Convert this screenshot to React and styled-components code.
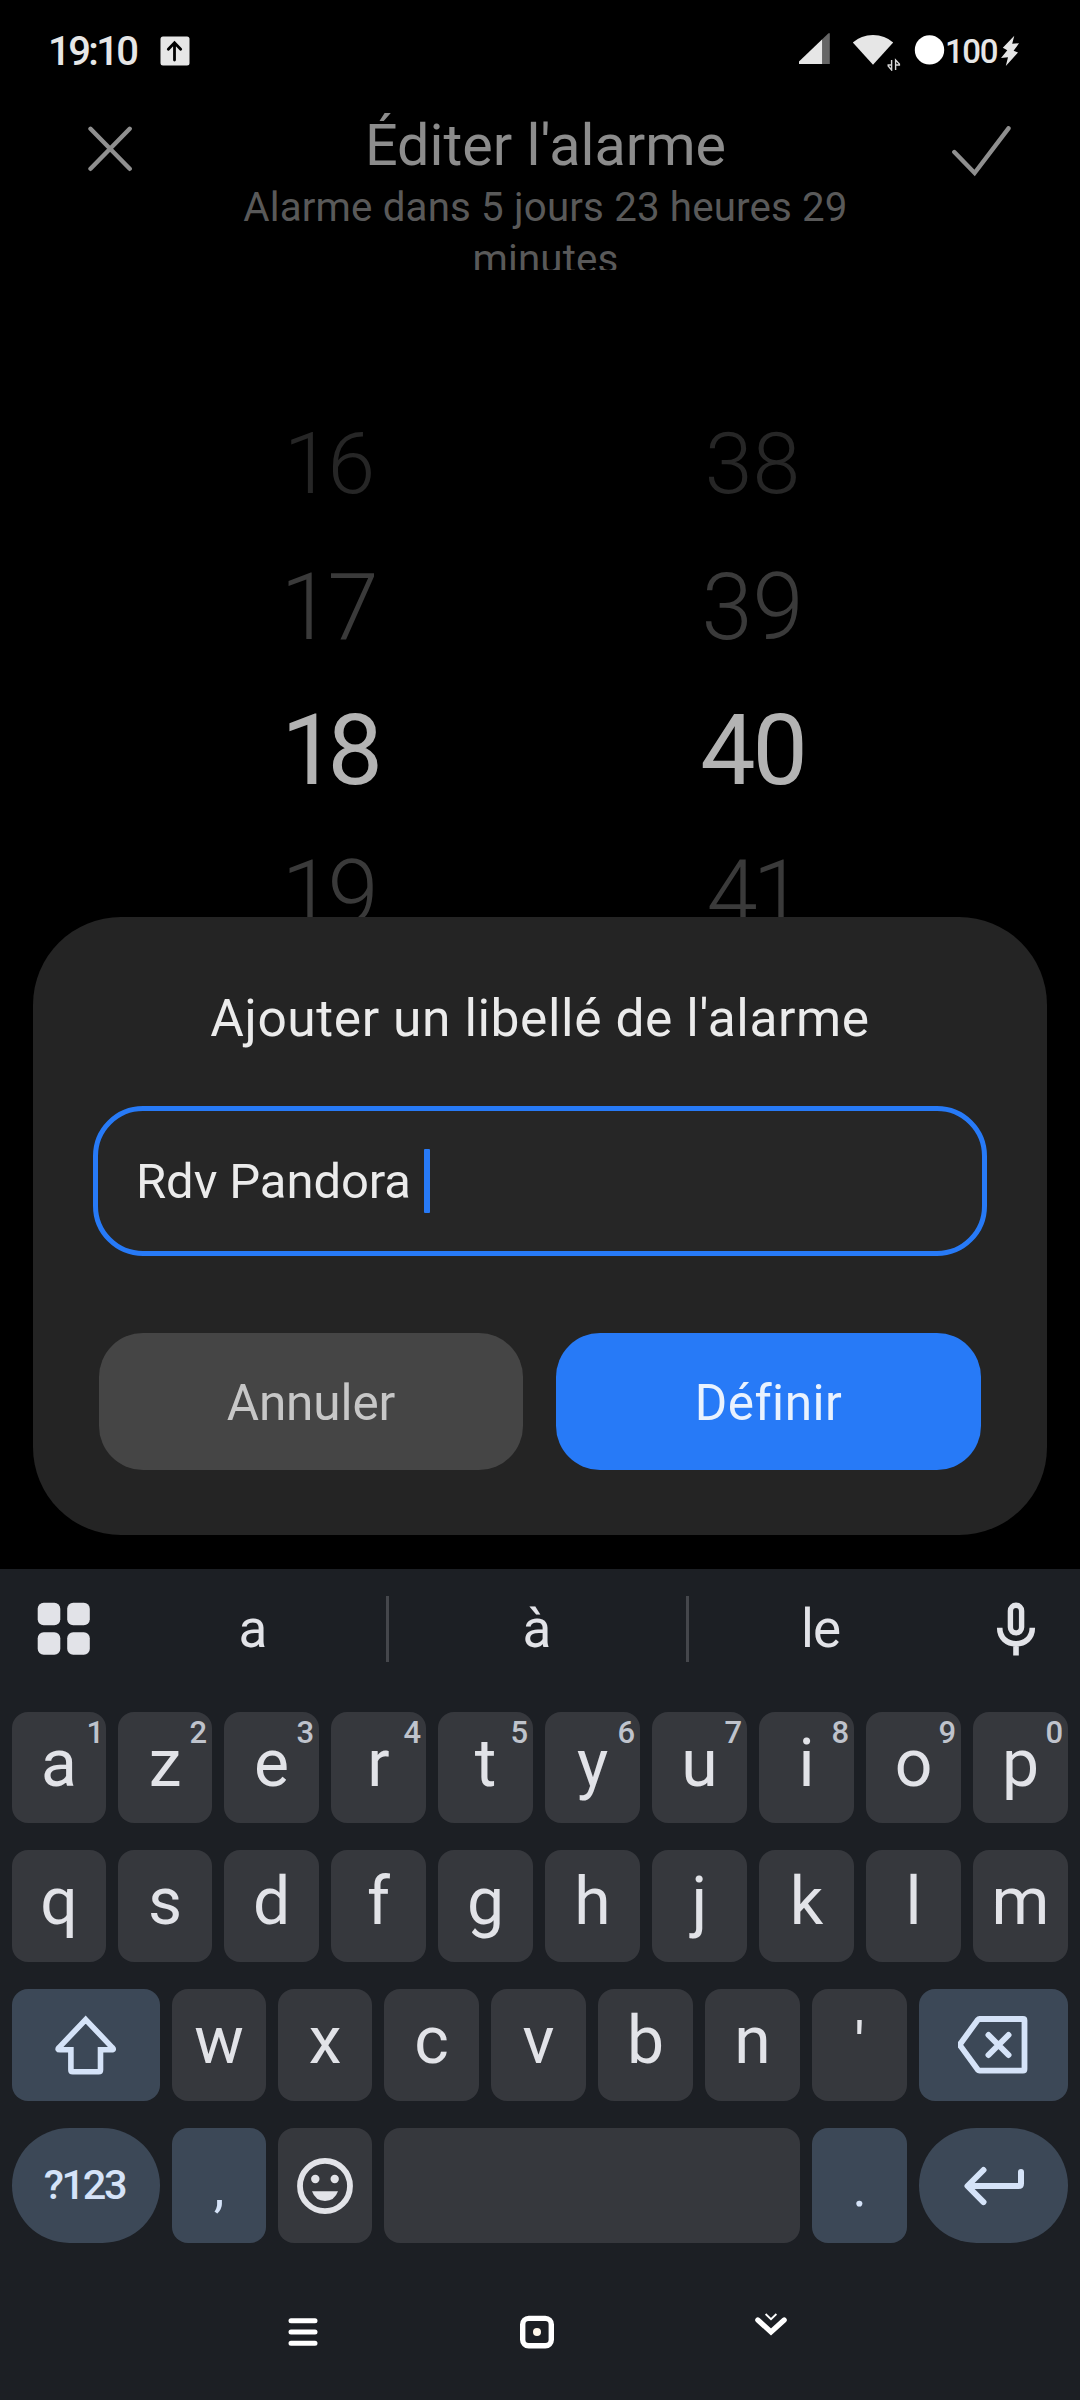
import React from "react";
import styled, { createGlobalStyle } from "styled-components";

const hours = [
  { value: "16", size: 86, weight: 300, color: "#262626", tracking: -4 },
  { value: "17", size: 92, weight: 300, color: "#3a3a3a", tracking: -4 },
  { value: "18", size: 98.5, weight: 400, color: "#b3b3b3", tracking: -9 },
  { value: "19", size: 92, weight: 300, color: "#3a3a3a", tracking: -5 },
];

const minutes = [
  { value: "38", size: 86, weight: 300, color: "#262626", tracking: 0 },
  { value: "39", size: 92, weight: 300, color: "#3a3a3a", tracking: 0 },
  { value: "40", size: 98.5, weight: 400, color: "#b3b3b3", tracking: -3 },
  { value: "41", size: 92, weight: 300, color: "#3a3a3a", tracking: -5 },
];

const topRow = [
  ["a", "1"],
  ["z", "2"],
  ["e", "3"],
  ["r", "4"],
  ["t", "5"],
  ["y", "6"],
  ["u", "7"],
  ["i", "8"],
  ["o", "9"],
  ["p", "0"],
];

const Wheel = ({ items }) => (
  <Column>
    {items.map((n) => (
      <Digit
        key={n.value}
        $size={n.size}
        $weight={n.weight}
        $color={n.color}
        $tracking={n.tracking}
      >
        {n.value}
      </Digit>
    ))}
  </Column>
);

const StatusIcons = () => (
  <svg width="148" height="40" viewBox="797 32 148 40">
    <path d="M799 65V62.5L822.5 40V65Z" fill="#e6e6e6" />
    <path d="M822.5 40L828.5 34.3H829.8V65H822.5Z" fill="#666" />
    <path d="M873 65.8L852.8 43.6Q861 36 873 36T893.2 43.6Z" fill="#e6e6e6" />
    <path
      d="M891.6 61V71L888.2 67V66H891.6M895.6 71V61L899.4 65V66H895.6"
      stroke="#d8d8d8"
      strokeWidth="1.4"
      fill="none"
    />
    <circle cx="929.5" cy="50.9" r="14.7" fill="#fff" />
  </svg>
);

const Bolt = () => (
  <svg width="20" height="32" viewBox="1000 35 20 32">
    <path
      d="M1014.3 35.7L1002.8 47.8L1007.3 50.3L1001 58L1008 57.2L1005.8 66L1018 52.6L1013.6 50.8L1019 43.3L1012.2 43.8Z"
      fill="#e6e6e6"
    />
  </svg>
);

const UploadBadge = () => (
  <svg width="30" height="30" viewBox="0 0 30 30">
    <rect x="0.5" y="0.5" width="29" height="29" rx="2.5" fill="#e6e6e6" />
    <path
      d="M14.5 24V7M8.3 13.2L14.5 6.8L20.7 13.2"
      fill="none"
      stroke="#000"
      strokeWidth="2.8"
      strokeLinecap="round"
    />
  </svg>
);

const CloseIcon = () => (
  <svg width="44" height="46" viewBox="88 126.5 44 46">
    <path
      d="M90.5 129.3L129.7 169.3M129.7 129.3L90.5 169.3"
      stroke="#8f8f8f"
      strokeWidth="4.4"
      strokeLinecap="round"
    />
  </svg>
);

const CheckIcon = () => (
  <svg width="60" height="52" viewBox="951 125 60 52">
    <path
      d="M954.3 151L974.6 172L1008.5 127.3"
      fill="none"
      stroke="#8f8f8f"
      strokeWidth="4.4"
      strokeLinecap="round"
    />
  </svg>
);

const GridIcon = () => (
  <svg width="54" height="54" viewBox="0 0 54 54" fill="#e2e3e8">
    <rect x="0.7" y="0.7" width="22.6" height="22.6" rx="6" />
    <rect x="30.2" y="0.7" width="22.6" height="22.6" rx="6" />
    <rect x="0.7" y="30.2" width="22.6" height="22.6" rx="6" />
    <rect x="30.2" y="30.2" width="22.6" height="22.6" rx="6" />
  </svg>
);

const MicIcon = () => (
  <svg width="40" height="54" viewBox="996 1601.5 40 54" fill="none" stroke="#e2e3e8">
    <rect x="1010.4" y="1604.8" width="11.2" height="27.6" rx="5.6" strokeWidth="5.4" />
    <path
      d="M999.7 1627.3C999.7 1637.5 1007 1643.3 1016 1643.3S1032.3 1637.5 1032.3 1627.3M1016 1644V1655"
      strokeWidth="5.6"
    />
  </svg>
);

const ShiftIcon = () => (
  <svg width="64" height="62" viewBox="54 2013 64 62">
    <path
      d="M85.7 2018.6L112.3 2046.6Q114.6 2048.8 111.5 2048.8H100.5V2069Q100.5 2070.8 98.7 2070.8H72.7Q70.9 2070.8 70.9 2069V2048.8H60Q56.8 2048.8 59 2046.6Z"
      fill="none"
      stroke="#d5e3f8"
      strokeWidth="5.6"
    />
  </svg>
);

const BackspaceIcon = () => (
  <svg width="72" height="60" viewBox="957.5 2015 72 60">
    <path
      d="M979 2019H1022.5Q1024 2019 1024 2020.5V2069Q1024 2070.6 1022.5 2070.6H979Q978 2070.6 977.3 2069.8L960.3 2046.4Q959 2044.8 960.3 2043.2L977.3 2019.8Q978 2019 979 2019Z"
      fill="none"
      stroke="#d5e3f8"
      strokeWidth="5.8"
    />
    <path
      d="M988 2035L1008 2055M1008 2035L988 2055"
      stroke="#d5e3f8"
      strokeWidth="6"
      strokeLinecap="round"
    />
  </svg>
);

const EnterIcon = () => (
  <svg width="64" height="44" viewBox="963 2163.5 64 44">
    <path
      d="M984.5 2169.5L968.5 2185.5L984.5 2201.6M969 2185.5H1019.5Q1022 2185.5 1022 2183V2171.5"
      fill="none"
      stroke="#d5e3f8"
      strokeWidth="6"
      strokeLinecap="round"
      strokeLinejoin="round"
    />
  </svg>
);

const SmileyIcon = () => (
  <svg width="56" height="58" viewBox="-28 -29 56 58" fill="#e2e3e8">
    <ellipse rx="25" ry="25.2" fill="none" stroke="#e2e3e8" strokeWidth="5.8" />
    <circle cx="-9.7" cy="-7" r="4.2" />
    <circle cx="9.7" cy="-7" r="4.2" />
    <path d="M-13 5.3H13Q9.5 15 0 15T-13 5.3Z" />
  </svg>
);

const MenuIcon = () => (
  <svg width="40" height="40" viewBox="-20 -20 40 40">
    <path
      d="M-12 -11.2H12M-12 0H12M-12 11.2H12"
      stroke="#fff"
      strokeWidth="5"
      strokeLinecap="round"
    />
  </svg>
);

const HomeIcon = () => (
  <svg width="40" height="40" viewBox="-20 -20 40 40">
    <rect
      x="-14.3"
      y="-13.6"
      width="28.6"
      height="27.4"
      rx="6"
      fill="none"
      stroke="#fff"
      strokeWidth="5.4"
    />
    <circle r="4" fill="#fff7ea" />
  </svg>
);

const HideKeyboardIcon = () => (
  <svg width="40" height="40" viewBox="-20 -20 40 40" fill="none" stroke="#fff">
    <path d="M-13.2 -12L0 0L13.2 -12" strokeWidth="5.2" strokeLinecap="round" />
    <path d="M-5.4 -18L0 -12.8L5.4 -18" strokeWidth="1.8" />
  </svg>
);

export default function App() {
  return (
    <Screen>
      <GlobalStyle />
      <StatusBar>
        <Clock>19:10</Clock>
        <UploadBadge />
        <Spacer />
        <StatusIcons />
        <Battery>100</Battery>
        <Bolt />
      </StatusBar>

      <Header>
        <CloseIcon />
        <Heading>
          <h1>Éditer l'alarme</h1>
          <p>Alarme dans 5 jours 23 heures 29 minutes</p>
        </Heading>
        <CheckIcon />
      </Header>

      <Picker>
        <Wheel items={hours} />
        <Wheel items={minutes} />
      </Picker>

      <Dialog>
        <h2>Ajouter un libellé de l'alarme</h2>
        <Field>
          <span>Rdv Pandora</span>
          <Caret />
        </Field>
        <Actions>
          <Button>Annuler</Button>
          <Button $primary>Définir</Button>
        </Actions>
      </Dialog>

      <Keyboard>
        <Suggestions>
          <GridIcon />
          <Suggestion>a</Suggestion>
          <Suggestion $wide>à</Suggestion>
          <Suggestion>le</Suggestion>
          <MicIcon />
        </Suggestions>
        <Keys>
          <KeyRow $height={111}>
            {topRow.map(([letter, hint]) => (
              <Key key={letter}>
                {letter}
                <Hint $narrow={hint === "1"}>{hint}</Hint>
              </Key>
            ))}
          </KeyRow>
          <KeyRow $height={112}>
            {"qsdfghjklm".split("").map((letter) => (
              <Key key={letter}>{letter}</Key>
            ))}
          </KeyRow>
          <KeyRow $height={112} $columns="148px 94px 94px repeat(5, 95px) 149px">
            <IconKey $accent>
              <ShiftIcon />
            </IconKey>
            {"wxcvbn".split("").map((letter) => (
              <Key key={letter}>{letter}</Key>
            ))}
            <ApostropheKey>'</ApostropheKey>
            <IconKey $accent>
              <BackspaceIcon />
            </IconKey>
          </KeyRow>
          <KeyRow $height={115} $columns="148px 94px 94px 1fr 95px 149px">
            <SymbolsKey $accent $pill>
              ?123
            </SymbolsKey>
            <PunctuationKey $accent>,</PunctuationKey>
            <IconKey>
              <SmileyIcon />
            </IconKey>
            <Key />
            <PunctuationKey $accent>.</PunctuationKey>
            <IconKey $accent $pill>
              <EnterIcon />
            </IconKey>
          </KeyRow>
        </Keys>
        <NavBar>
          <MenuIcon />
          <HomeIcon />
          <HideKeyboardIcon />
        </NavBar>
      </Keyboard>
    </Screen>
  );
}

const GlobalStyle = createGlobalStyle`
  * {
    box-sizing: border-box;
  }

  body {
    margin: 0;
    background: #000;
  }

  h1, h2, p {
    margin: 0;
    font-weight: 400;
  }

  svg {
    display: block;
    flex: none;
  }
`;

const Screen = styled.div`
  display: flex;
  flex-direction: column;
  width: 1080px;
  height: 2400px;
  overflow: hidden;
  background: #000;
  font-family: Roboto, "Noto Sans", sans-serif;
`;

const StatusBar = styled.div`
  display: flex;
  align-items: center;
  flex: none;
  height: 102px;
  padding: 0 60px 0 48px;
  color: #e6e6e6;
`;

const Clock = styled.div`
  width: 112px;
  padding-top: 1px;
  font-size: 40px;
  font-weight: 500;
  letter-spacing: -2.6px;
`;

const Spacer = styled.div`
  flex: 1;
`;

const Battery = styled.div`
  width: 55px;
  font-size: 33px;
  font-weight: 500;
  letter-spacing: -1.4px;
`;

const Header = styled.div`
  display: flex;
  justify-content: space-between;
  flex: none;
  height: 168px;
  padding: 11px 69px 0 88px;

  > svg {
    margin-top: 13px;
  }
`;

const Heading = styled.div`
  width: 640px;
  margin-left: 8px;
  overflow: hidden;
  text-align: center;

  h1 {
    height: 69px;
    font-size: 57.5px;
    line-height: 65px;
    color: #8c8c8c;
  }

  p {
    font-size: 40.3px;
    line-height: 52px;
    letter-spacing: 0.14px;
    color: #595959;
  }
`;

const Picker = styled.div`
  display: grid;
  grid-template-columns: 424px 424px;
  justify-content: center;
  gap: 1px;
  flex: none;
  height: 647px;
  padding-top: 122px;
  overflow: hidden;
`;

const Column = styled.div`
  display: flex;
  flex-direction: column;
`;

const Digit = styled.div`
  flex: none;
  height: 143.5px;
  line-height: 143.5px;
  text-align: center;
  font-size: ${(p) => p.$size}px;
  font-weight: ${(p) => p.$weight};
  color: ${(p) => p.$color};
  letter-spacing: ${(p) => p.$tracking}px;
`;

const Dialog = styled.div`
  flex: none;
  height: 618px;
  margin: 0 33px;
  padding: 72px 60px 0;
  border-radius: 88px;
  background: #242424;

  h2 {
    font-size: 51.5px;
    line-height: 60px;
    letter-spacing: 0.58px;
    text-align: center;
    color: #ebebeb;
  }
`;

const Field = styled.div`
  display: flex;
  align-items: center;
  height: 150px;
  margin-top: 57px;
  padding-left: 38px;
  border: 5px solid #277af7;
  border-radius: 50px;
  background: #262626;
  color: #ebebeb;
  font-size: 49px;
  letter-spacing: -0.1px;

  span {
    padding-top: 1px;
  }
`;

const Caret = styled.div`
  width: 6px;
  height: 64px;
  margin-left: 13px;
  border-radius: 1px;
  background: #277af7;
`;

const Actions = styled.div`
  display: grid;
  grid-template-columns: 424px 1fr;
  gap: 33px;
  margin: 77px 6px 0;
`;

const Button = styled.button`
  height: 137px;
  padding: 2px 0 0;
  border: 0;
  border-radius: 44px;
  background: ${(p) => (p.$primary ? "#277af7" : "#454545")};
  color: ${(p) => (p.$primary ? "#e9f2fe" : "#c7c7c7")};
  font-family: inherit;
  font-size: 49.5px;
  letter-spacing: ${(p) => (p.$primary ? "0.5px" : "-0.1px")};
`;

const Keyboard = styled.div`
  flex: none;
  height: 831px;
  margin-top: 34px;
  background: #1c1f24;
  color: #e2e3e8;
`;

const Suggestions = styled.div`
  display: flex;
  align-items: center;
  height: 120px;
  padding: 0 44px 0 37px;
`;

const Suggestion = styled.div`
  display: flex;
  align-items: center;
  justify-content: center;
  flex: none;
  width: ${(p) => (p.$wide ? "303px" : "265px")};
  height: 66px;
  padding-right: 2px;
  border: solid #45474c;
  border-width: ${(p) => (p.$wide ? "0 3px" : "0")};
  font-size: 53px;
  letter-spacing: -1px;

  &:nth-child(2) {
    margin-left: 30px;
  }

  &:nth-child(4) {
    margin-right: 42px;
  }
`;

const Keys = styled.div`
  display: flex;
  flex-direction: column;
  gap: 27px;
  padding: 23px 12px 0;
`;

const KeyRow = styled.div`
  display: grid;
  grid-template-columns: ${(p) => p.$columns || "94px 94px repeat(8, 95px)"};
  gap: 12px;
  height: ${(p) => p.$height}px;
`;

const Key = styled.div`
  position: relative;
  display: flex;
  align-items: center;
  justify-content: center;
  padding-bottom: 9px;
  border-radius: ${(p) => (p.$pill ? "58px" : "16px")};
  background: ${(p) => (p.$accent ? "#3c4857" : "#36383d")};
  color: ${(p) => (p.$accent ? "#d5e3f8" : "#e2e3e8")};
  font-size: 66px;
`;

const IconKey = styled(Key)`
  padding-bottom: 0;
`;

const ApostropheKey = styled(Key)`
  padding-bottom: 1px;
  font-size: 60px;
`;

const SymbolsKey = styled(Key)`
  padding: 0 3px 2px 0;
  font-size: 41.5px;
  font-weight: 500;
  letter-spacing: -2.4px;
`;

const PunctuationKey = styled(Key)`
  padding: 4px 0 0;
  font-size: 54px;
`;

const Hint = styled.span`
  position: absolute;
  top: 3px;
  right: ${(p) => (p.$narrow ? 2 : 5)}px;
  color: #bfc3cc;
  font-size: 31px;
  font-weight: 500;
  line-height: 36px;
`;

const NavBar = styled.div`
  display: flex;
  justify-content: center;
  gap: 194px;
  padding: 69px 6px 0 0;
`;
